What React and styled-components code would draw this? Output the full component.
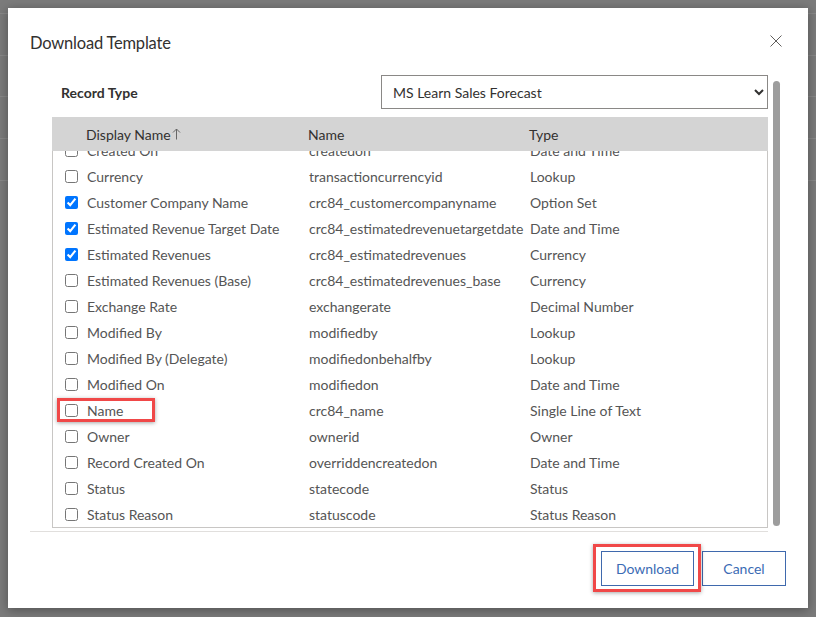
import React, { useLayoutEffect, useRef } from "react";
import styled, { createGlobalStyle } from "styled-components";

const GlobalStyle = createGlobalStyle`
  html, body {
    margin: 0;
    padding: 0;
  }
  body {
    width: 816px;
    height: 617px;
    overflow: hidden;
    background-color: #7b7b7b;
    background-image: repeating-linear-gradient(
      180deg,
      #888888 0,
      #888888 1px,
      transparent 1px,
      transparent 41.75px
    );
    background-size: 100% 168px;
    background-position: 0 13px;
    background-repeat: no-repeat;
    font-family: Lato, "Open Sans", sans-serif;
  }
`;

const fields = [
  { label: "Created On", name: "createdon", type: "Date and Time" },
  { label: "Currency", name: "transactioncurrencyid", type: "Lookup" },
  { label: "Customer Company Name", name: "crc84_customercompanyname", type: "Option Set", checked: true },
  { label: "Estimated Revenue Target Date", name: "crc84_estimatedrevenuetargetdate", type: "Date and Time", checked: true },
  { label: "Estimated Revenues", name: "crc84_estimatedrevenues", type: "Currency", checked: true },
  { label: "Estimated Revenues (Base)", name: "crc84_estimatedrevenues_base", type: "Currency" },
  { label: "Exchange Rate", name: "exchangerate", type: "Decimal Number" },
  { label: "Modified By", name: "modifiedby", type: "Lookup" },
  { label: "Modified By (Delegate)", name: "modifiedonbehalfby", type: "Lookup" },
  { label: "Modified On", name: "modifiedon", type: "Date and Time" },
  { label: "Name", name: "crc84_name", type: "Single Line of Text", marked: true },
  { label: "Owner", name: "ownerid", type: "Owner" },
  { label: "Record Created On", name: "overriddencreatedon", type: "Date and Time" },
  { label: "Status", name: "statecode", type: "Status" },
  { label: "Status Reason", name: "statuscode", type: "Status Reason" },
];

const Backdrop = styled.div`
  padding: 8px;
`;

const Dialog = styled.div`
  width: 800px;
  height: 600px;
  background: #ffffff;
  box-shadow: 0 2px 10px rgba(0, 0, 0, 0.35);
  display: flex;
  flex-direction: column;
`;

const Header = styled.div`
  height: 67px;
  box-sizing: border-box;
  padding: 23px 26px 0 22px;
  display: flex;
  justify-content: space-between;
  align-items: flex-start;
`;

const Title = styled.h1`
  margin: 0;
  font-size: 16.5px;
  letter-spacing: -0.2px;
  font-weight: 400;
  line-height: 24px;
  color: #323130;
`;

const CloseButton = styled.button`
  margin-top: 4px;
  width: 12px;
  height: 12px;
  padding: 0;
  border: 0;
  background: none;
  display: flex;
  cursor: pointer;
`;

const Body = styled.div`
  display: flex;
  padding: 0 28px 0 22px;
`;

const Main = styled.div`
  flex: 1;
  border-bottom: 1px solid #e1dfdd;
`;

const Inner = styled.div`
  padding: 0 0 3px 22px;
`;

const RecordRow = styled.div`
  height: 34px;
  display: flex;
  align-items: center;
  padding-left: 9px;
  margin-bottom: 8px;
`;

const FieldLabel = styled.label`
  flex: 1;
  font-size: 14px;
  font-weight: 700;
  color: #323130;
`;

const Select = styled.select`
  width: 387px;
  height: 34px;
  box-sizing: border-box;
  border: 1px solid #8a8886;
  border-radius: 0;
  padding: 0 4px 0 7px;
  font-family: inherit;
  font-size: 14px;
  color: #323130;
  background: #ffffff;
`;

const Grid = styled.div`
  display: grid;
  grid-template-columns: 256px 221px 1fr;
  align-items: center;
`;

const TableHead = styled(Grid)`
  height: 34px;
  background: #d4d4d4;
  font-size: 14px;
  color: #323130;
`;

const HeadCell = styled.div`
  display: flex;
  align-items: center;
  gap: 1px;
  padding-left: ${(p) => p.$indent || 0}px;
`;

const TableBody = styled.div`
  height: 377px;
  box-sizing: border-box;
  border: 1px solid #c8c6c4;
  border-top: 0;
  overflow-y: auto;
  scrollbar-width: none;
  &::-webkit-scrollbar {
    display: none;
  }
`;

const Row = styled(Grid)`
  height: 26px;
  font-size: 14px;
  color: #555555;
`;

const LabelCell = styled.div`
  position: relative;
  display: flex;
  align-items: center;
  gap: 9px;
  padding-left: 12px;
  height: 100%;
`;

const Check = styled.input`
  margin: 0;
  width: 13px;
  height: 13px;
`;

const Cell = styled.div`
  white-space: nowrap;
`;

const Marker = styled.div`
  position: absolute;
  left: 4px;
  top: 1px;
  width: 98px;
  height: 24px;
  box-sizing: border-box;
  border: 3px solid #f04848;
  box-shadow: 0 1px 4px rgba(0, 0, 0, 0.35);
  pointer-events: none;
`;

const ScrollTrack = styled.div`
  width: 7px;
  margin: 6px 0 0 5px;
`;

const ScrollThumb = styled.div`
  height: 445px;
  border-radius: 4px;
  background: #9d9d9d;
`;

const Footer = styled.div`
  display: flex;
  justify-content: flex-end;
  gap: 8px;
  padding: 19px 22px 22px;
`;

const ButtonWrap = styled.div`
  position: relative;
`;

const Button = styled.button`
  height: 35px;
  width: ${(p) => p.$width}px;
  box-sizing: border-box;
  border: 1px solid #3f69ad;
  background: #ffffff;
  color: #3b6bb4;
  font-family: inherit;
  font-size: 14px;
  padding: 0;
  cursor: pointer;
`;

const ButtonMarker = styled.div`
  position: absolute;
  left: -8px;
  top: -7px;
  right: -7px;
  bottom: -6px;
  border: 3px solid #f04848;
  box-shadow: 0 1px 4px rgba(0, 0, 0, 0.35);
  pointer-events: none;
`;

const SortArrow = () => (
  <svg width="9" height="12" viewBox="0 0 9 12" fill="none">
    <path d="M4.5 11.5V1M1 4.5L4.5 1L8 4.5" stroke="#666" strokeWidth="1" />
  </svg>
);

const CloseIcon = () => (
  <svg width="12" height="12" viewBox="0 0 12 12" fill="none">
    <path d="M0.5 0.5L11.5 11.5M11.5 0.5L0.5 11.5" stroke="#605e5c" strokeWidth="1" />
  </svg>
);

export default function App() {
  const bodyRef = useRef(null);

  useLayoutEffect(() => {
    const el = bodyRef.current;
    if (el) el.scrollTop = el.scrollHeight;
  }, []);

  return (
    <>
      <GlobalStyle />
      <Backdrop>
        <Dialog role="dialog" aria-label="Download Template">
          <Header>
            <Title>Download Template</Title>
            <CloseButton aria-label="Close">
              <CloseIcon />
            </CloseButton>
          </Header>
          <Body>
            <Main>
              <Inner>
                <RecordRow>
                  <FieldLabel htmlFor="record-type">Record Type</FieldLabel>
                  <Select id="record-type" defaultValue="forecast">
                    <option value="forecast">MS Learn Sales Forecast</option>
                  </Select>
                </RecordRow>
                <TableHead>
                  <HeadCell $indent={34}>
                    Display Name
                    <SortArrow />
                  </HeadCell>
                  <HeadCell>Name</HeadCell>
                  <HeadCell>Type</HeadCell>
                </TableHead>
                <TableBody ref={bodyRef}>
                  {fields.map((f) => (
                    <Row key={f.name}>
                      <LabelCell>
                        <Check type="checkbox" defaultChecked={!!f.checked} />
                        <Cell>{f.label}</Cell>
                        {f.marked && <Marker />}
                      </LabelCell>
                      <Cell>{f.name}</Cell>
                      <Cell>{f.type}</Cell>
                    </Row>
                  ))}
                </TableBody>
              </Inner>
            </Main>
            <ScrollTrack>
              <ScrollThumb />
            </ScrollTrack>
          </Body>
          <Footer>
            <ButtonWrap>
              <Button $width={93}>Download</Button>
              <ButtonMarker />
            </ButtonWrap>
            <Button $width={84}>Cancel</Button>
          </Footer>
        </Dialog>
      </Backdrop>
    </>
  );
}
